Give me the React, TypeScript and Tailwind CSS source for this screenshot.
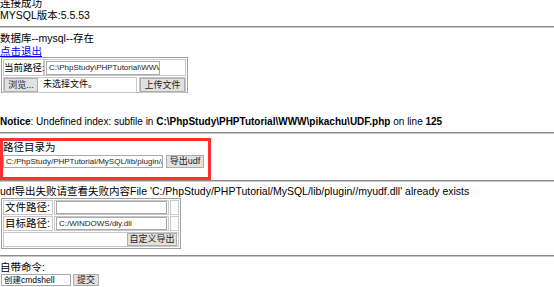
import React from "react";

const Hr = ({ mt }: { mt: string }) => (
  <div className={`${mt} h-[2px] w-full border-t border-[#8a8a8a] bg-[#c8c8c8]`} />
);

const Btn = ({ children, className = "" }: { children: React.ReactNode; className?: string }) => (
  <div
    className={`flex items-center justify-center whitespace-nowrap border border-[#adadad] bg-[#e1e1e1] text-[9px] leading-none text-[#222] ${className}`}
  >
    {children}
  </div>
);

const Field = ({ value = "", className = "" }: { value?: string; className?: string }) => (
  <div
    className={`flex items-center overflow-hidden whitespace-nowrap border border-[#a9a9a9] bg-white pl-[2px] text-[8px] leading-none text-[#222] ${className}`}
  >
    {value}
  </div>
);

export default function App() {
  return (
    <div
      className="relative h-[287px] w-[554px] overflow-hidden bg-white text-[10.5px] text-black"
      style={{ fontFamily: '"Liberation Sans", "Noto Sans CJK SC", sans-serif' }}
    >
      <div className="-mt-[3px] h-[12px] leading-[12px]">连接成功</div>
      <div className="h-[12px] leading-[12px]">MYSQL版本:5.5.53</div>
      <Hr mt="mt-[5px]" />

      <div className="mt-[4px] h-[13px] leading-[13px]">数据库--mysql--存在</div>
      <div className="h-[12px] leading-[12px] text-[#0000ee] underline">点击退出</div>

      {/* upload table */}
      <div className="ml-[1px] h-[36px] w-[187px] border border-[#a0a0a0] p-[1px]">
        <div className="flex h-[17px]">
          <div className="flex w-[41px] items-center whitespace-nowrap border border-[#c8c8c8] text-[9.5px] leading-none">
            当前路径:
          </div>
          <div className="flex flex-1 items-center border border-[#c8c8c8] pl-[1px]">
            <Field value="C:\PhpStudy\PHPTutorial\WWW" className="h-[14px] w-[114px]" />
          </div>
        </div>
        <div className="mt-[1px] flex h-[16px] gap-[2px]">
          <div className="flex w-[134px] items-center gap-[5px] border border-[#c8c8c8] bg-white">
            <Btn className="h-[14px] w-[34px]">浏览...</Btn>
            <span className="text-[9px]">未选择文件。</span>
          </div>
          <div className="flex flex-1 items-center border border-[#c8c8c8]">
            <Btn className="h-[14px] w-full">上传文件</Btn>
          </div>
        </div>
      </div>

      <div className="mt-[23px] h-[12px] whitespace-nowrap text-[10px] leading-[12px]">
        <b>Notice</b>: Undefined index: subfile in <b>C:\PhpStudy\PHPTutorial\WWW\pikachu\UDF.php</b> on line{" "}
        <b>125</b>
      </div>
      <Hr mt="mt-[4px]" />

      {/* highlighted export block */}
      <div className="mt-[4px] h-[42px] w-[211px] border-[3px] border-[#ff3030]">
        <div className="h-[13px] leading-[13px]">路径目录为</div>
        <div className="mt-[1px] flex items-center gap-[3px]">
          <Field value="C:/PhpStudy/PHPTutorial/MySQL/lib/plugin//myudf.dll" className="h-[13px] w-[160px]" />
          <Btn className="h-[13px] w-[38px]">导出udf</Btn>
        </div>
      </div>
      <Hr mt="mt-0" />

      <div className="mt-[3px] h-[12px] whitespace-nowrap leading-[12px]">
        udf导出失败请查看失败内容File 'C:/PhpStudy/PHPTutorial/MySQL/lib/plugin//myudf.dll' already exists
      </div>

      {/* custom export table */}
      <div className="ml-[1px] mt-[1px] h-[51px] w-[180px] border border-[#a0a0a0] p-[1px]">
        {[
          ["文件路径:", ""],
          ["目标路径:", "C:/WINDOWS/diy.dll"],
        ].map(([label, value]) => (
          <div key={label} className="mb-[1px] flex h-[15px] gap-[1px]">
            <div className="flex w-[50px] items-center whitespace-nowrap border border-[#c8c8c8] pl-[1px] leading-none">
              {label}
            </div>
            <div className="flex w-[115px] items-center border border-[#c8c8c8] px-[1px]">
              <Field value={value} className="h-[13px] w-full" />
            </div>
            <div className="flex-1 border border-[#c8c8c8]" />
          </div>
        ))}
        <div className="flex h-[15px] items-center justify-end border border-[#c8c8c8] pr-[1px]">
          <Btn className="h-[13px] w-[50px]">自定义导出</Btn>
        </div>
      </div>
      <Hr mt="mt-[6px]" />

      <div className="mt-[4px] h-[12px] leading-[12px]">自带命令:</div>
      <div className="mt-[1px] flex items-center gap-[2px] pl-[1px]">
        <div className="flex h-[12px] w-[70px] items-center justify-between border border-[#a9a9a9] bg-white px-[2px] text-[8.5px] leading-none">
          <span>创建cmdshell</span>
          <span className="text-[7px] text-[#888]">⌵</span>
        </div>
        <Btn className="h-[12px] w-[26px]">提交</Btn>
      </div>
    </div>
  );
}
